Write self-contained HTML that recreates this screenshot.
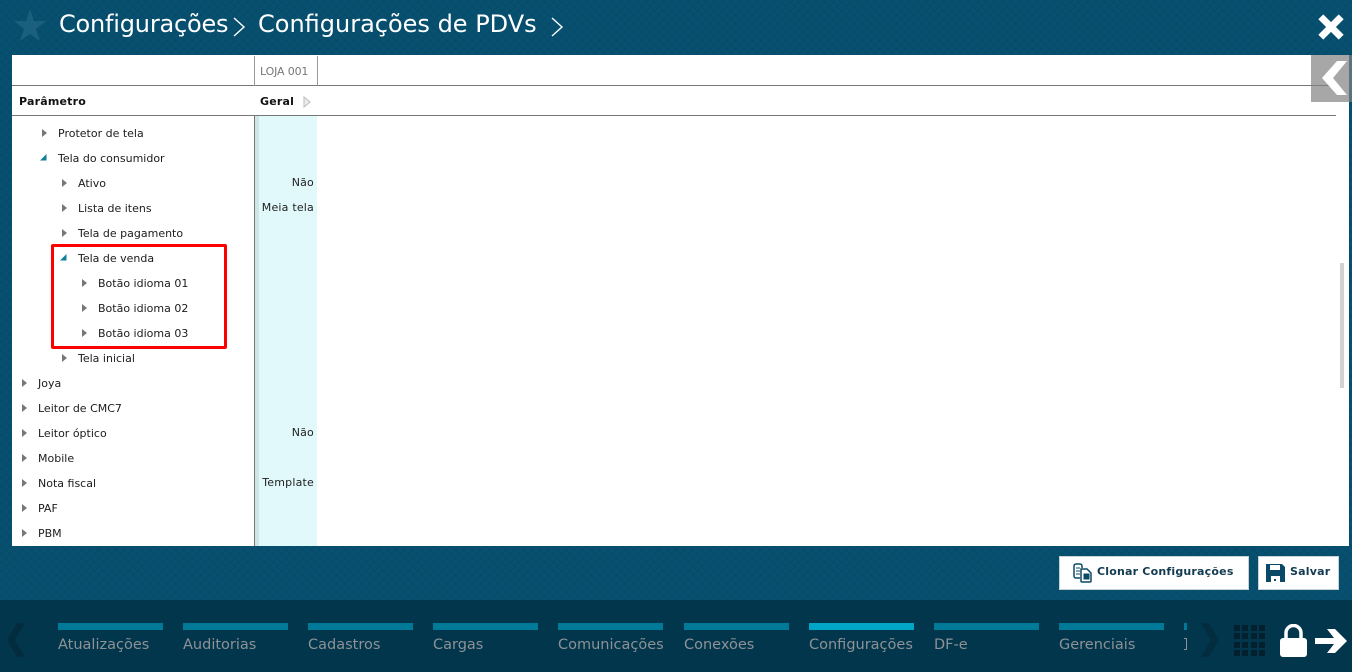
<!DOCTYPE html>
<html><head><meta charset="utf-8">
<style>
html,body{margin:0;padding:0;width:1352px;height:672px;overflow:hidden}
body{position:relative;background-color:#07506f;font-family:"DejaVu Sans",sans-serif;
background-image:repeating-linear-gradient(45deg,rgba(0,0,0,.05) 0 1px,transparent 1px 6px),repeating-linear-gradient(-45deg,rgba(0,0,0,.05) 0 1px,transparent 1px 6px)}
div,span,svg{position:absolute}
.t{font-size:24px;color:#fff;white-space:nowrap;top:10px;font-family:"DejaVu Sans",sans-serif}
.r{font-size:11px;color:#1c1c1c;white-space:nowrap;line-height:14px}
.v{font-size:11px;color:#222;white-space:nowrap;line-height:14px;right:1038px;text-align:right;letter-spacing:.2px}
.bar{top:623px;height:7px;width:105px;background:#007a96}
.lb{top:636px;font-size:14.5px;line-height:18px;color:#8c9296;white-space:nowrap}
</style></head>
<body>
<svg style="left:13px;top:8px" width="34" height="34" viewBox="0 0 34 34"><path d="M17 1l4 12h12l-10 8 4 12-10-7-10 7 4-12L1 13h12z" fill="#1a5f7d"/></svg>
<div class="t" style="left:59px;letter-spacing:-.2px">Configurações</div>
<svg style="left:232px;top:16px" width="14" height="22" viewBox="0 0 14 22"><path d="M2 2l10 9-10 9" fill="none" stroke="#fff" stroke-width="1.4"/></svg>
<div class="t" style="left:258px">Configurações de PDVs</div>
<svg style="left:550px;top:16px" width="14" height="22" viewBox="0 0 14 22"><path d="M2 2l10 9-10 9" fill="none" stroke="#fff" stroke-width="1.4"/></svg>
<svg style="left:1317px;top:13px" width="28" height="28" viewBox="0 0 28 28"><path d="M3.800 3.800L24.200 24.200M24.200 3.800L3.800 24.200" fill="none" stroke="#fff" stroke-width="7"/></svg>

<div style="left:12px;top:55px;width:1337px;height:491px;background:#fff;overflow:hidden">
 <div style="left:0;top:30px;width:1324px;height:1px;background:#777"></div>
 <div style="left:0;top:60px;width:1324px;height:1px;background:#777"></div>
 <div style="left:242px;top:1px;width:1px;height:30px;background:#999"></div>
 <div style="left:305px;top:1px;width:1px;height:30px;background:#999"></div>
 <div style="left:248px;top:10px;font-size:11px;line-height:14px;color:#777;letter-spacing:-.15px;white-space:nowrap">LOJA 001</div>
 <div style="left:7px;top:40px;font-size:11px;line-height:14px;font-weight:bold;color:#111;white-space:nowrap;letter-spacing:.2px">Parâmetro</div>
 <div style="left:248px;top:40px;font-size:11px;line-height:14px;font-weight:bold;color:#111;white-space:nowrap;letter-spacing:.2px">Geral</div>
 <svg style="left:291px;top:41px" width="8" height="12" viewBox="0 0 8 12"><path d="M1 1l6 5-6 5z" fill="#eee" stroke="#bbb"/></svg>
 <div style="left:242px;top:61px;width:1px;height:430px;background:#777"></div>
 <div style="left:243px;top:61px;width:4px;height:430px;background:#cfe6e6"></div>
 <div style="left:247px;top:61px;width:58px;height:430px;background:#e2f9fb"></div>
 <div style="left:1328px;top:208px;width:4px;height:125px;background:#d2d2d2"></div>
</div>

<div id="tree">
<svg style="left:42px;top:129px" width="5" height="8"><path d="M0 0l5 4-5 4z" fill="#777"/></svg><div class="r" style="left:58px;top:127px">Protetor de tela</div>
<svg style="left:40px;top:154px" width="7" height="7"><path d="M6.500 0v6.500H0z" fill="#117f98"/></svg><div class="r" style="left:58px;top:152px">Tela do consumidor</div>
<svg style="left:62px;top:179px" width="5" height="8"><path d="M0 0l5 4-5 4z" fill="#777"/></svg><div class="r" style="left:78px;top:177px">Ativo</div>
<svg style="left:62px;top:204px" width="5" height="8"><path d="M0 0l5 4-5 4z" fill="#777"/></svg><div class="r" style="left:78px;top:202px">Lista de itens</div>
<svg style="left:62px;top:229px" width="5" height="8"><path d="M0 0l5 4-5 4z" fill="#777"/></svg><div class="r" style="left:78px;top:227px">Tela de pagamento</div>
<svg style="left:60px;top:254px" width="7" height="7"><path d="M6.500 0v6.500H0z" fill="#117f98"/></svg><div class="r" style="left:78px;top:252px">Tela de venda</div>
<svg style="left:82px;top:279px" width="5" height="8"><path d="M0 0l5 4-5 4z" fill="#777"/></svg><div class="r" style="left:98px;top:277px">Botão idioma 01</div>
<svg style="left:82px;top:304px" width="5" height="8"><path d="M0 0l5 4-5 4z" fill="#777"/></svg><div class="r" style="left:98px;top:302px">Botão idioma 02</div>
<svg style="left:82px;top:329px" width="5" height="8"><path d="M0 0l5 4-5 4z" fill="#777"/></svg><div class="r" style="left:98px;top:327px">Botão idioma 03</div>
<svg style="left:62px;top:354px" width="5" height="8"><path d="M0 0l5 4-5 4z" fill="#777"/></svg><div class="r" style="left:78px;top:352px">Tela inicial</div>
<svg style="left:22px;top:379px" width="5" height="8"><path d="M0 0l5 4-5 4z" fill="#777"/></svg><div class="r" style="left:38px;top:377px">Joya</div>
<svg style="left:22px;top:404px" width="5" height="8"><path d="M0 0l5 4-5 4z" fill="#777"/></svg><div class="r" style="left:38px;top:402px">Leitor de CMC7</div>
<svg style="left:22px;top:429px" width="5" height="8"><path d="M0 0l5 4-5 4z" fill="#777"/></svg><div class="r" style="left:38px;top:427px">Leitor óptico</div>
<svg style="left:22px;top:454px" width="5" height="8"><path d="M0 0l5 4-5 4z" fill="#777"/></svg><div class="r" style="left:38px;top:452px">Mobile</div>
<svg style="left:22px;top:479px" width="5" height="8"><path d="M0 0l5 4-5 4z" fill="#777"/></svg><div class="r" style="left:38px;top:477px">Nota fiscal</div>
<svg style="left:22px;top:504px" width="5" height="8"><path d="M0 0l5 4-5 4z" fill="#777"/></svg><div class="r" style="left:38px;top:502px">PAF</div>
<svg style="left:22px;top:529px" width="5" height="8"><path d="M0 0l5 4-5 4z" fill="#777"/></svg><div class="r" style="left:38px;top:527px">PBM</div>
</div>
<div class="v" style="top:176px">Não</div>
<div class="v" style="top:201px">Meia tela</div>
<div class="v" style="top:426px">Não</div>
<div class="v" style="top:476px">Template</div>

<div style="left:51px;top:244px;width:170px;height:99px;border:3.500px solid #f00;border-radius:2px"></div>

<div style="left:1311px;top:55px;width:41px;height:47px;background:rgba(130,130,130,.7)"></div>
<svg style="left:1321px;top:60px" width="28" height="36" viewBox="0 0 28 36"><path d="M16 1h10L12 18l14 17H16L1 18z" fill="#fff"/></svg>

<div style="left:1059px;top:556px;width:188px;height:32px;background:#fff;border:1px solid #c8d2d6"></div>
<svg style="left:1073px;top:563px" width="20" height="20" viewBox="0 0 20 20"><path d="M7 15H3a2 2 0 0 1-2-2V3a2 2 0 0 1 2-2h4a2 2 0 0 1 2 2v2" fill="none" stroke="#0b4a66" stroke-width="1.500"/><path d="M8 6h6l4 4v8a1 1 0 0 1-1 1H9a1 1 0 0 1-1-1z" fill="#fff" stroke="#0b4a66" stroke-width="1.500"/><path d="M3 5h4M3 8h4M3 11h4M11 11h5v5h-5z" stroke="#0b4a66" fill="#0b4a66"/></svg>
<div style="left:1097px;top:565px;font-size:11px;line-height:14px;font-weight:bold;color:#123a50;white-space:nowrap;letter-spacing:.2px">Clonar Configurações</div>
<div style="left:1258px;top:556px;width:79px;height:32px;background:#fff;border:1px solid #c8d2d6"></div>
<svg style="left:1266px;top:564px" width="19" height="18" viewBox="0 0 19 18"><path d="M0 0h16l3 3v15H0z" fill="#0a4a68"/><path d="M4 1h10v5H4z" fill="#fff"/><path d="M5 12h9v6H5z" fill="#fff"/><path d="M8 15h2v2H8z" fill="#0a4a68"/></svg>
<div style="left:1290px;top:565px;font-size:11px;line-height:14px;font-weight:bold;color:#123a50;white-space:nowrap;letter-spacing:.2px">Salvar</div>

<div style="left:0;top:600px;width:1352px;height:72px;background:#02364c"></div>
<svg style="left:7px;top:623px" width="18" height="34" viewBox="0 0 18 34"><path d="M10 0h8L8 17l10 17h-8L0 17z" fill="#032c3f"/></svg>
<div class="bar" style="left:58px"></div><div class="lb" style="left:58px">Atualizações</div>
<div class="bar" style="left:183px"></div><div class="lb" style="left:183px">Auditorias</div>
<div class="bar" style="left:308px"></div><div class="lb" style="left:308px">Cadastros</div>
<div class="bar" style="left:433px"></div><div class="lb" style="left:433px">Cargas</div>
<div class="bar" style="left:558px"></div><div class="lb" style="left:558px">Comunicações</div>
<div class="bar" style="left:684px"></div><div class="lb" style="left:684px">Conexões</div>
<div class="bar" style="left:809px;background:#00a6c8"></div><div class="lb" style="left:809px">Configurações</div>
<div class="bar" style="left:934px"></div><div class="lb" style="left:934px">DF-e</div>
<div class="bar" style="left:1059px"></div><div class="lb" style="left:1059px">Gerenciais</div>
<div class="bar" style="left:1184px;width:3px"></div>
<div style="left:1184px;top:638px;width:3px;height:12px;border:solid #8c9296;border-width:1px 1px 1px 0;box-sizing:border-box"></div>
<svg style="left:1201px;top:623px" width="18" height="34" viewBox="0 0 18 34"><path d="M0 0h8l10 17L8 34H0l10-17z" fill="#032c3f"/></svg>
<svg style="left:1234px;top:625px" width="32" height="32" viewBox="0 0 32 32" fill="#03202f"><path d="M0 0h6v6H0zM8 0h6v6H8zM17 0h6v6h-6zM25 0h6v6h-6zM0 8h6v6H0zM8 8h6v6H8zM17 8h6v6h-6zM25 8h6v6h-6zM0 17h6v6H0zM8 17h6v6H8zM17 17h6v6h-6zM25 17h6v6h-6zM0 25h6v6H0zM8 25h6v6H8zM17 25h6v6h-6zM25 25h6v6h-6z"/></svg>
<svg style="left:1280px;top:624px" width="27" height="33" viewBox="0 0 27 33"><path d="M6 15V9a7.500 7.500 0 0 1 15 0v6" fill="none" stroke="#fff" stroke-width="3.500"/><rect x="0" y="14" width="27" height="19" rx="3" fill="#fff"/></svg>
<svg style="left:1315px;top:628px" width="32" height="26" viewBox="0 0 32 26"><path d="M0 10h19L12 1h8l12 12-12 12h-8l7-9H0z" fill="#fff"/></svg>
</body></html>
